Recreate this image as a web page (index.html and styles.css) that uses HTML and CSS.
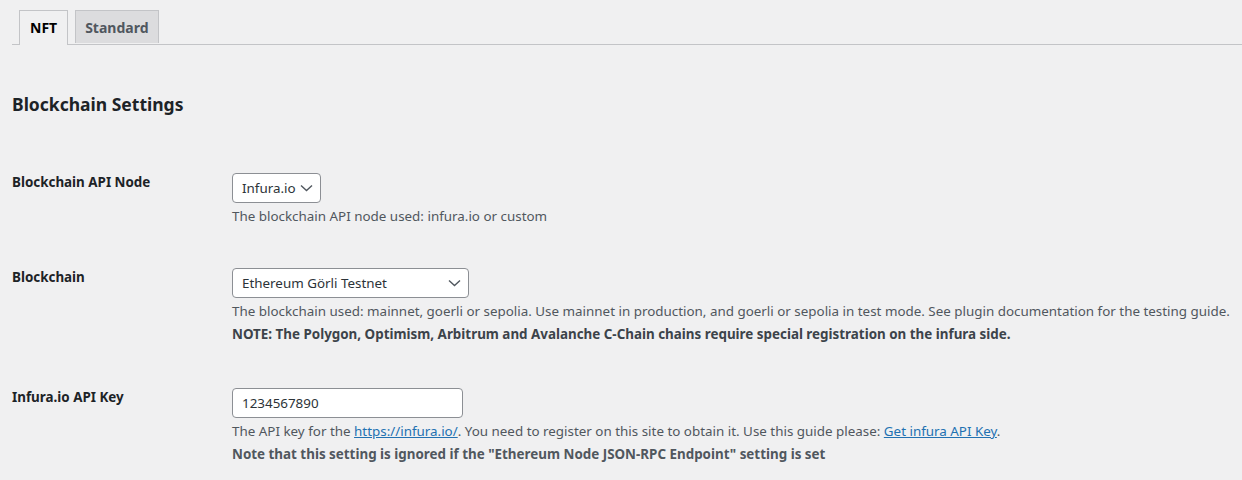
FILE: index.html
```html
<!DOCTYPE html>
<html>
<head>
<meta charset="utf-8">
<link rel="stylesheet" href="styles.css">
</head>
<body>
<div class="wrap">
  <nav class="tabs">
    <span class="tab tab-active">NFT</span>
    <span class="tab">Standard</span>
  </nav>
  <h2 class="section-title">Blockchain Settings</h2>
  <div class="form">
    <div class="row row-1">
      <div class="label">Blockchain API Node</div>
      <div class="field">
        <div class="select select-node"><span>Infura.io</span>
          <svg class="chev" width="13" height="8" viewBox="0 0 13 8"><polyline points="1,1.5 6.5,6.5 12,1.5" fill="none" stroke="#50575e" stroke-width="1.4"/></svg>
        </div>
        <p class="desc">The blockchain API node used: infura.io or custom</p>
      </div>
    </div>
    <div class="row row-2">
      <div class="label">Blockchain</div>
      <div class="field">
        <div class="select select-chain"><span>Ethereum Görli Testnet</span>
          <svg class="chev" width="13" height="8" viewBox="0 0 13 8"><polyline points="1,1.5 6.5,6.5 12,1.5" fill="none" stroke="#50575e" stroke-width="1.4"/></svg>
        </div>
        <p class="desc">The blockchain used: mainnet, goerli or sepolia. Use mainnet in production, and goerli or sepolia in test mode. See plugin documentation for the testing guide.<br><strong>NOTE: The Polygon, Optimism, Arbitrum and Avalanche C-Chain chains require special registration on the infura side.</strong></p>
      </div>
    </div>
    <div class="row row-3">
      <div class="label">Infura.io API Key</div>
      <div class="field">
        <div class="input">1234567890</div>
        <p class="desc">The API key for the <a href="#">https://infura.io/</a>. You need to register on this site to obtain it. Use this guide please: <a href="#">Get infura API Key</a>.<br><strong>Note that this setting is ignored if the "Ethereum Node JSON-RPC Endpoint" setting is set</strong></p>
      </div>
    </div>
  </div>
</div>
</body>
</html>
```

FILE: styles.css
```css
html, body {
  margin: 0;
  padding: 0;
  background: #f0f0f1;
}
body {
  font-family: "Noto Sans", "Open Sans", sans-serif;
  font-size: 13.4px;
  color: #1d2327;
  width: 1242px;
  height: 480px;
  overflow: hidden;
}
.wrap {
  padding: 10px 0 0 12px;
}
.tabs {
  display: flex;
  gap: 7px;
  padding-left: 7px;
  border-bottom: 1px solid #c3c4c7;
  height: 34px;
}
.tab {
  display: block;
  height: 33px;
  box-sizing: border-box;
  padding: 0 9px;
  line-height: 33px;
  font-size: 14px;
  font-weight: 700;
  color: #50575e;
  background: #dcdcde;
  border: 1px solid #c3c4c7;
  border-bottom: none;
}
.tab-active {
  background: #f0f0f1;
  color: #000;
  height: 35px;
  padding: 0 10px;
}
.section-title {
  margin: 47px 0 0;
  font-size: 17.5px;
  line-height: 24px;
  font-weight: 700;
  color: #1d2327;
}
.form {
  margin-top: 57px;
}
.row {
  display: grid;
  grid-template-columns: 220px 1fr;
  align-items: start;
}
.row-2 { margin-top: 40px; }
.row-3 { margin-top: 42px; }
.label {
  font-weight: 700;
  line-height: 18px;
  color: #1d2327;
}
.select, .input {
  box-sizing: border-box;
  height: 30px;
  border: 1px solid #8c8f94;
  border-radius: 4px;
  background: #fff;
  color: #2c3338;
  display: flex;
  align-items: center;
  padding: 0 8px 0 9px;
  line-height: 28px;
}
.select {
  justify-content: space-between;
}
.select-node { width: 89px; }
.select-chain { width: 237px; }
.input { width: 231px; }
.chev { margin-right: -1px; }
.desc {
  margin: 2px 0 0;
  line-height: 23px;
  color: #50575e;
}
.desc strong {
  color: #50575e;
}
.row-2 .desc strong { color: #3c434a; }
.desc a {
  color: #2271b1;
  text-decoration: underline;
}
```
